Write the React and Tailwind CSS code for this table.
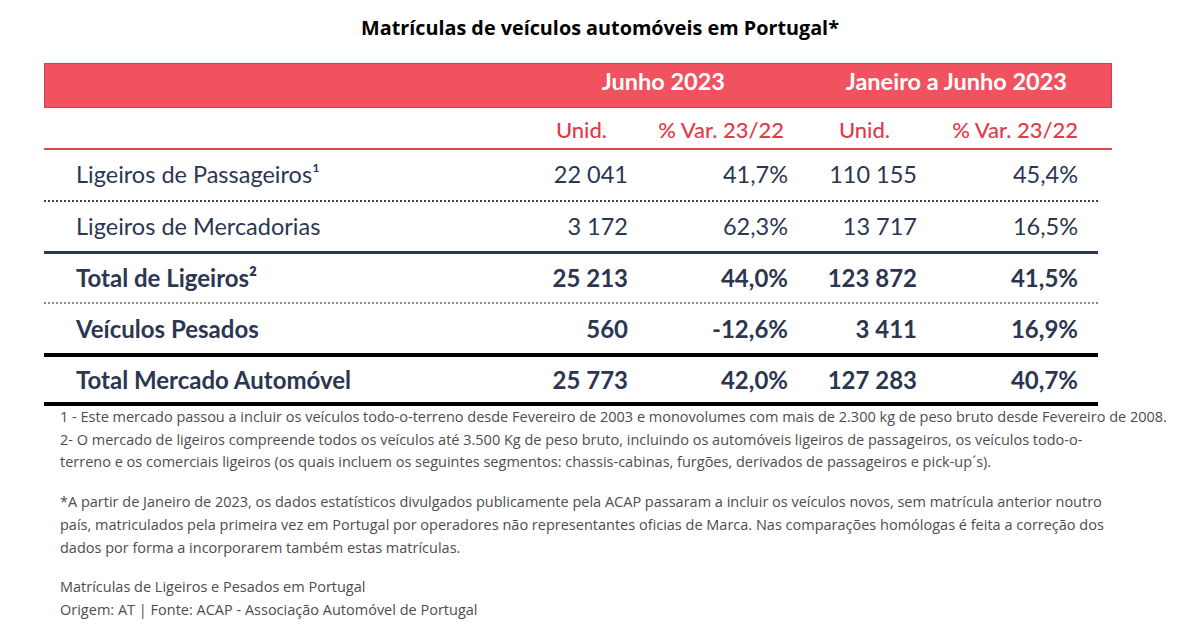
import React from "react";

const rows = [
  { label: "Ligeiros de Passageiros¹", a: "22 041", b: "41,7%", c: "110 155", d: "45,4%", bold: false, h: "h-[52px]", line: "dotted" },
  { label: "Ligeiros de Mercadorias", a: "3 172", b: "62,3%", c: "13 717", d: "16,5%", bold: false, h: "h-[52px]", line: "navy" },
  { label: "Total de Ligeiros²", a: "25 213", b: "44,0%", c: "123 872", d: "41,5%", bold: true, h: "h-[50px]", line: "grey" },
  { label: "Veículos Pesados", a: "560", b: "-12,6%", c: "3 411", d: "16,9%", bold: true, h: "h-[53px]", line: "black" },
  { label: "Total Mercado Automóvel", a: "25 773", b: "42,0%", c: "127 283", d: "40,7%", bold: true, h: "h-[49px]", line: "black" },
];

const lineClass = {
  dotted: "border-b-2 border-dotted border-[#3a4456]",
  navy: "border-b-[3px] border-[#2c3850]",
  grey: "border-b-2 border-dotted border-[#8a8a8a]",
  black: "border-b-4 border-black",
};

const cols = "grid grid-cols-[464px_120px_160px_129px_161px]";

export default function App() {
  return (
    <div className="w-[1200px] h-[626px] bg-white overflow-hidden">
      <h1 className="pt-[15px] text-center text-[19.8px] font-bold text-black leading-[26px] font-['Open_Sans',sans-serif]">
        Matrículas de veículos automóveis em Portugal*
      </h1>

      <div className="ml-[44px] mt-[22px] font-['Lato',sans-serif]">
        <div className={`${cols} w-[1068px] h-[45px] items-center pb-[12px] bg-[#f0535f] border border-[#dc3c4a] text-white text-[23.5px] font-bold`}>
          <div />
          <div className="col-span-2 text-right pr-[64px]">Junho 2023</div>
          <div className="col-span-2 text-right pr-[12px]">Janeiro a Junho 2023</div>
        </div>
        <div className={`${cols} w-[1068px] h-[42px] items-center pt-[3px] text-[#e23a48] text-[22px] font-medium border-b-2 border-[#e8424f]`}>
          <div />
          <div className="text-right pr-[21px]">Unid.</div>
          <div className="text-right pr-[4px]">% Var. 23/22</div>
          <div className="text-right pr-[27px]">Unid.</div>
          <div className="text-right">% Var. 23/22</div>
        </div>

        {rows.map((r) => (
          <div
            key={r.label}
            className={`${cols} w-[1054px] ${r.h} items-center text-[#2b3650] ${r.bold ? "font-bold text-[24px]" : "font-normal text-[23.5px]"} ${lineClass[r.line]}`}
          >
            <div className="pl-[32px]">{r.label}</div>
            <div className="text-right">{r.a}</div>
            <div className="text-right">{r.b}</div>
            <div className="text-right">{r.c}</div>
            <div className="text-right">{r.d}</div>
          </div>
        ))}
      </div>

      <div className="ml-[60px] text-[14.5px] leading-[22.7px] text-[#4d4d4d] font-['Open_Sans',sans-serif]">
        <p>1 - Este mercado passou a incluir os veículos todo-o-terreno desde Fevereiro de 2003 e monovolumes com mais de 2.300 kg de peso bruto desde Fevereiro de 2008.</p>
        <p>
          2- O mercado de ligeiros compreende todos os veículos até 3.500 Kg de peso bruto, incluindo os automóveis ligeiros de passageiros, os veículos todo-o-
          <br />
          terreno e os comerciais ligeiros (os quais incluem os seguintes segmentos: chassis-cabinas, furgões, derivados de passageiros e pick-up´s).
        </p>
        <p className="mt-[17px]">
          *A partir de Janeiro de 2023, os dados estatísticos divulgados publicamente pela ACAP passaram a incluir os veículos novos, sem matrícula anterior noutro
          <br />
          país, matriculados pela primeira vez em Portugal por operadores não representantes oficias de Marca. Nas comparações homólogas é feita a correção dos
          <br />
          dados por forma a incorporarem também estas matrículas.
        </p>
        <p className="mt-[17px]">
          Matrículas de Ligeiros e Pesados em Portugal
          <br />
          Origem: AT | Fonte: ACAP - Associação Automóvel de Portugal
        </p>
      </div>
    </div>
  );
}
